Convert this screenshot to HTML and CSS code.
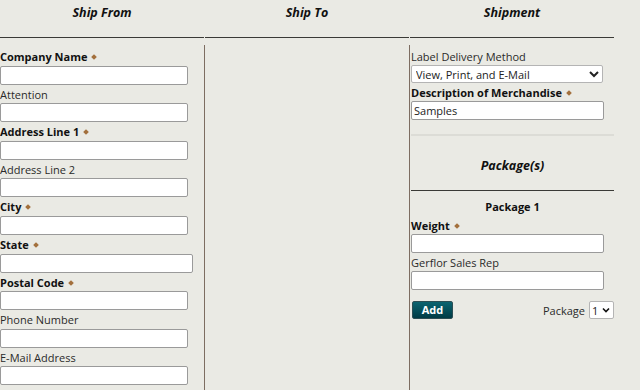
FILE: index.html
```html
<!DOCTYPE html>
<html lang="en">
<head>
    <meta charset="UTF-8">
    <meta name="viewport" content="width=device-width, initial-scale=1.0">
    <title>Create Shipment</title>
    <link rel="stylesheet" href="styles.css">
</head>
<body>
    <div class="shipment-form">
        <div class="section-headers">
            <h3 class="section-title">Ship From</h3>
            <h3 class="section-title">Ship To</h3>
            <h3 class="section-title">Shipment</h3>
        </div>

        <div class="section-body">
            <!-- Ship From -->
            <div class="ship-from">
                <div class="field">
                    <label class="field-label required">Company Name <span class="req"></span></label>
                    <input type="text" class="text-input">
                </div>
                <div class="field">
                    <label class="field-label">Attention</label>
                    <input type="text" class="text-input">
                </div>
                <div class="field">
                    <label class="field-label required">Address Line 1 <span class="req"></span></label>
                    <input type="text" class="text-input">
                </div>
                <div class="field">
                    <label class="field-label">Address Line 2</label>
                    <input type="text" class="text-input">
                </div>
                <div class="field">
                    <label class="field-label required">City <span class="req"></span></label>
                    <input type="text" class="text-input">
                </div>
                <div class="field">
                    <label class="field-label required">State <span class="req"></span></label>
                    <input type="text" class="text-input state-input">
                </div>
                <div class="field">
                    <label class="field-label required">Postal Code <span class="req"></span></label>
                    <input type="text" class="text-input">
                </div>
                <div class="field">
                    <label class="field-label">Phone Number</label>
                    <input type="text" class="text-input">
                </div>
                <div class="field">
                    <label class="field-label">E-Mail Address</label>
                    <input type="text" class="text-input">
                </div>
            </div>

            <!-- Ship To -->
            <div class="ship-to"></div>

            <!-- Shipment -->
            <div class="shipment">
                <label class="field-label">Label Delivery Method</label>
                <select class="select-input">
                    <option>View, Print, and E-Mail</option>
                    <option>Print Only</option>
                    <option>E-Mail Only</option>
                </select>
                <label class="field-label required">Description of Merchandise <span class="req"></span></label>
                <input type="text" class="text-input wide-input" value="Samples">

                <div class="packages">
                    <h3 class="section-title">Package(s)</h3>
                    <div class="package-title">Package 1</div>
                    <label class="field-label required">Weight <span class="req"></span></label>
                    <input type="text" class="text-input wide-input">
                    <label class="field-label">Gerflor Sales Rep</label>
                    <input type="text" class="text-input wide-input">

                    <div class="package-actions">
                        <button class="add-button">Add</button>
                        <div class="package-picker">
                            <span>Package</span>
                            <div class="package-select-box">
                                <select class="package-select">
                                    <option>1</option>
                                </select>
                                <svg class="chevron" width="8" height="6" viewBox="0 0 8 6">
                                    <path d="M1 1.5 L4 4.5 L7 1.5" fill="none" stroke="#111" stroke-width="1.6"/>
                                </svg>
                            </div>
                        </div>
                    </div>
                </div>
            </div>
        </div>
    </div>
</body>
</html>
```

FILE: styles.css
```css
/* Basic Reset */
* {
    margin: 0;
    padding: 0;
    box-sizing: border-box;
}

body {
    font-family: 'Open Sans', 'Noto Sans', sans-serif;
    font-size: 11px;
    color: #222;
    background-color: #eaeae4;
}

.shipment-form {
    width: 614px;
}

.section-headers {
    display: grid;
    grid-template-columns: 204px 204px 204px;
    column-gap: 1px;
}

.section-title {
    font-size: 12.5px;
    font-weight: 700;
    font-style: italic;
    line-height: 16px;
    color: #111;
    text-align: center;
    padding: 5px 0 16px;
    border-bottom: 1px solid #3a3a36;
}

.section-body {
    display: grid;
    grid-template-columns: 204px 205px 205px;
    margin-top: 7px;
}

.ship-from,
.ship-to,
.shipment {
    padding-top: 2px;
    padding-bottom: 6px;
}

.ship-to,
.shipment {
    border-left: 1px solid #7d6d61;
}

.shipment {
    padding-left: 1px;
}

.field-label {
    display: block;
    height: 18.6px;
    padding-top: 1px;
    line-height: 18px;
    color: #2a2a2a;
}

.shipment .field-label {
    height: 18px;
}

.field-label.required {
    font-weight: 700;
    color: #111;
}

.req {
    display: inline-block;
    width: 4px;
    height: 4px;
    margin-left: 2px;
    background-color: #a3703c;
    transform: rotate(45deg);
    vertical-align: 2px;
}

.text-input {
    display: block;
    width: 188px;
    height: 19px;
    padding: 0 2px;
    border: 1px solid #9a9a9a;
    border-radius: 2px;
    background-color: #ffffff;
    font-family: inherit;
    font-size: 11px;
    color: #222;
}

.state-input {
    width: 193px;
}

.wide-input {
    width: 193px;
}

.select-input {
    display: block;
    width: 192px;
    height: 18px;
    padding: 0;
    border: 1px solid #b4b4b4;
    border-radius: 2px;
    background-color: #ffffff;
    font-family: inherit;
    font-size: 11px;
    color: #222;
}

.packages {
    margin-top: 14px;
    padding-top: 17px;
    border-top: 2px solid #dcdcd6;
}

.package-title {
    margin-top: 7px;
    font-weight: 700;
    line-height: 18px;
    text-align: center;
    color: #111;
}

.package-actions {
    display: flex;
    justify-content: space-between;
    align-items: center;
    margin-top: 11px;
}

.add-button {
    width: 41px;
    height: 18px;
    margin-left: 1px;
    border: 1px solid #2c4e54;
    border-radius: 2px;
    background: linear-gradient(#0b6470, #003b45);
    color: #ffffff;
    font-family: inherit;
    font-size: 11px;
    font-weight: 700;
    line-height: 14px;
    cursor: pointer;
}

.package-picker {
    display: flex;
    align-items: center;
    gap: 4px;
    color: #2a2a2a;
}

.package-select-box {
    display: flex;
    align-items: center;
    width: 25px;
    height: 18px;
    padding: 0 3px 0 2px;
    border: 1px solid #b4b4b4;
    border-radius: 2px;
    background-color: #ffffff;
}

.package-select {
    appearance: none;
    width: 10px;
    border: none;
    background: transparent;
    font-family: inherit;
    font-size: 11px;
    color: #222;
}
```
